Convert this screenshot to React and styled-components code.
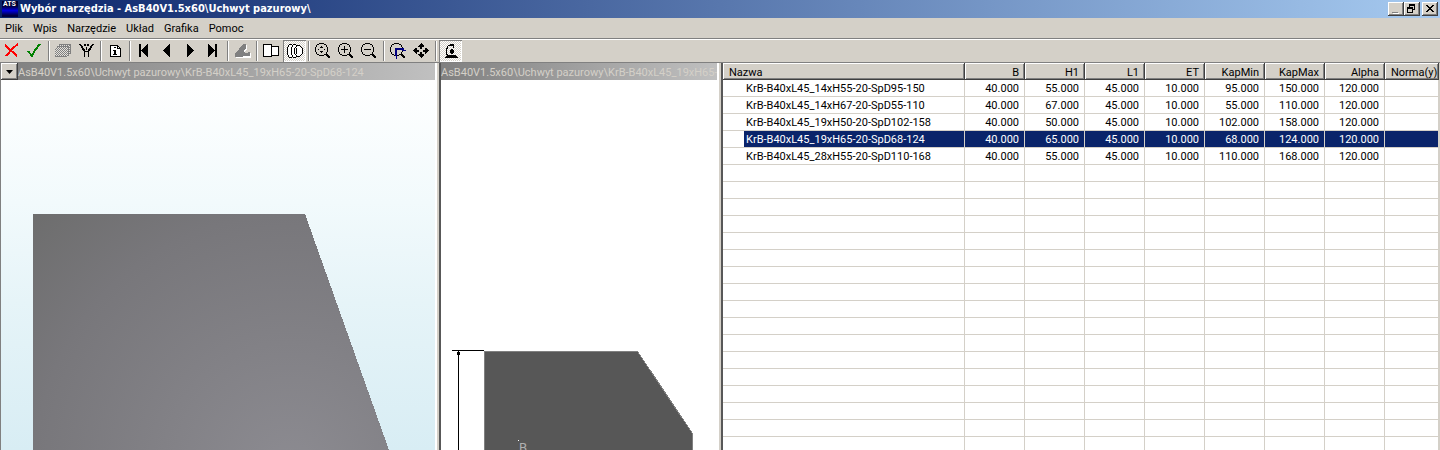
import React, { useState } from 'react';
import styled, { createGlobalStyle, css } from 'styled-components';

const face = '#d4d0c8';
const navy = '#0a246a';

const GlobalStyle = createGlobalStyle`
  * {
    box-sizing: border-box;
  }
  body {
    margin: 0;
    overflow: hidden;
    background: ${face};
    font-family: Roboto, "Liberation Sans", Arial, sans-serif;
    font-size: 11px;
    color: #000;
  }
  button {
    font: inherit;
    color: inherit;
    border: 0;
    padding: 0;
    background: none;
  }
`;

const raised = css`
  background: ${face};
  box-shadow: inset -1px -1px #404040, inset 1px 1px #fff,
    inset -2px -2px #808080;
`;

const Window = styled.div`
  display: flex;
  flex-direction: column;
  height: 100vh;
`;

const TitleBar = styled.header`
  display: flex;
  align-items: center;
  height: 18px;
  padding: 0 2px;
  gap: 2px;
  background: linear-gradient(to right, ${navy}, #a6caf0);
`;

const Title = styled.h1`
  flex: 1;
  margin: 0;
  font-family: 'DejaVu Sans Condensed', 'DejaVu Sans', sans-serif;
  font-size: 11px;
  line-height: 18px;
  font-weight: bold;
  color: #fff;
  white-space: nowrap;
`;

const WindowButtons = styled.div`
  display: flex;
`;

const WindowButton = styled.button`
  ${raised}
  width: 16px;
  height: 14px;
  svg {
    display: block;
  }
`;

const MenuBar = styled.nav`
  display: flex;
  height: 21px;
  border-bottom: 1px solid #808080;
`;

const MenuButton = styled.button`
  padding: 2px 5px 0;
  line-height: 18px;
`;

const ToolBar = styled.div`
  display: flex;
  height: 23px;
  border-top: 1px solid #fff;
`;

const ToolButton = styled.button`
  width: 23px;
  height: 22px;
  ${({ $pressed }) =>
    $pressed &&
    css`
      background: repeating-conic-gradient(#fff 0 25%, ${face} 0 50%) 0 0 / 2px
        2px;
      box-shadow: inset 1px 1px #808080, inset -1px -1px #fff;
    `}
  svg {
    display: block;
  }
`;

const Separator = styled.div`
  width: 2px;
  height: 20px;
  margin: 1px 2px;
  border-left: 1px solid #808080;
  border-right: 1px solid #fff;
`;

const Panes = styled.main`
  flex: 1;
  min-height: 0;
  display: grid;
  grid-template-columns:
    minmax(0, 437fr) 2px minmax(0, 280fr) 2px
    minmax(0, 719fr);
  border-top: 1px solid #808080;
`;

const Pane = styled.section`
  display: flex;
  flex-direction: column;
  min-height: 0;
  overflow: hidden;
  background: #fff;
  border-left: ${({ $first }) =>
    $first ? '1px solid #808080' : '2px solid #585858'};
  border-right: ${({ $last }) =>
    $last ? `1px solid ${face}` : '2px solid #fff'};
`;

const Splitter = styled.div`
  background: ${face};
`;

const PaneTitle = styled.div`
  display: flex;
  flex: none;
  height: 17px;
  line-height: 19px;
  overflow: hidden;
  white-space: nowrap;
  color: ${face};
  background: linear-gradient(to right, #808080, #c0c0c0);
`;

const PaneMenuButton = styled.button`
  ${raised}
  flex: none;
  width: 17px;
  height: 17px;
  svg {
    display: block;
  }
`;

const Scene = styled.svg`
  display: block;
  flex: 1;
  min-height: 0;
  width: 100%;
  background: ${({ $sky }) =>
    $sky ? 'linear-gradient(#fff, #f2fafc 33%, #e6f4f8 60%, #d8edf4)' : '#fff'};
`;

const Table = styled.table`
  width: 100%;
  table-layout: fixed;
  border-collapse: separate;
  border-spacing: 0;
`;

const NameCol = styled.col`
  width: 242px;
`;

const NumberCol = styled.col`
  width: 60px;
`;

const HeadCell = styled.th`
  ${raised}
  height: 17px;
  padding: 2px 6px 0;
  line-height: 15px;
  font-weight: normal;
  text-align: ${({ $left }) => ($left ? 'left' : 'right')};
  white-space: nowrap;
  overflow: hidden;
`;

const Cell = styled.td`
  height: 17px;
  padding: ${({ $name }) => ($name ? '0' : '2px 5px 0')};
  line-height: 14px;
  text-align: ${({ $name }) => ($name ? 'left' : 'right')};
  white-space: nowrap;
  border-right: 1px solid ${face};
  border-bottom: 1px solid ${face};
`;

const ToolName = styled.span`
  display: block;
  margin-left: 21px;
  padding: 2px 0 0 2px;
`;

const Row = styled.tr`
  ${({ $selected }) =>
    $selected &&
    css`
      color: #fff;
      ${ToolName}, ${Cell}:not(:first-child) {
        background: ${navy};
      }
    `}
`;

const Icon = ({ children, ...props }) => (
  <svg
    width="23"
    height="22"
    viewBox="0 0 23 22"
    fill="none"
    stroke="#000"
    shapeRendering="crispEdges"
    aria-hidden="true"
    {...props}
  >
    {children}
  </svg>
);

const Lens = ({ children }) => (
  <Icon>
    <path d="M7 3.5h5M5 4.5h2M12 4.5h2M4.5 5v2M14.5 5v2M3.5 7v5M15.5 7v5M4.5 12v2M14.5 12v2M5 14.5h2M12 14.5h2M7 15.5h5" />
    <path d="M14 14l4 4" strokeWidth="2" />
    {children}
  </Icon>
);

const icons = {
  cancel: (
    <Icon stroke="#f00" strokeWidth="2">
      <path d="M5 5l12 11M18 4l-5 4-7 8" />
    </Icon>
  ),
  accept: (
    <Icon stroke="#008000" strokeWidth="2">
      <path d="M5 11l4 5 3-6 5-6" />
    </Icon>
  ),
  stack: (
    <Icon stroke="none">
      <defs>
        <pattern id="mesh" width="2" height="2" patternUnits="userSpaceOnUse">
          <path d="M0 0h1v1H0zM1 1h1v1H1z" fill="#808080" />
        </pattern>
      </defs>
      <path d="M7 4h11l1 1v9l-3 1v2H4l-1-1V9l2-1V6z" fill="#e4e1dc" />
      <path d="M7 4h11l1 1v9l-3 1v2H4l-1-1V9l2-1V6z" fill="url(#mesh)" />
      <path
        d="M7 4.5h11M5 6.5h11M18.5 5v9M16.5 7v9M3 16.5h11"
        stroke="#808080"
      />
    </Icon>
  ),
  fork: (
    <Icon>
      <path d="M4 4.5h2M5 5.5h2M6 6.5h2M6 7.5h2M7 8.5h2M7 9.5h3M8 10.5h2M17 4.5h2M16 5.5h2M15 6.5h2M15 7.5h2M14 8.5h2M13 9.5h3M13 10.5h2M9 11.5h5M9.5 12v5M13.5 12v5" />
      <path d="M9 4h2v2H9zM12 4h2v2h-2zM11 7h1v3h-1z" fill="#000" stroke="none" />
    </Icon>
  ),
  info: (
    <Icon>
      <path d="M6.5 5.5h7l3 3v8h-10z" fill="#fff" />
      <path d="M13.5 5v3.5H17" />
      <path
        d="M10 7h2v1h-2zM9 10h3v4h1v1H9v-1h1v-3H9z"
        fill="#000"
        stroke="none"
      />
    </Icon>
  ),
  first: (
    <Icon stroke="none" fill="#000">
      <path d="M6 4h2v13H6zM15 4v13l-7-6.5z" />
    </Icon>
  ),
  previous: (
    <Icon stroke="none" fill="#000">
      <path d="M14 4v13l-7-6.5z" />
    </Icon>
  ),
  next: (
    <Icon stroke="none" fill="#000">
      <path d="M8 4v13l7-6.5z" />
    </Icon>
  ),
  last: (
    <Icon stroke="none" fill="#000">
      <path d="M13 4h2v13h-2zM6 4v13l7-6.5z" />
    </Icon>
  ),
  profile: (
    <Icon stroke="none">
      <path d="M5 18v-4l3-2 2-4 3-3h3v5l-2 1v2l2 1 4-1v5z" fill="#fff" />
      <path d="M4 17v-4l3-2 2-4 3-3h3v5l-2 1v2l2 1 4-1v4z" fill="#808080" />
    </Icon>
  ),
  flat: (
    <Icon fill="#fff">
      <path d="M3.5 4.5h8v12h-8zM11.5 6.5h7v9h-7z" />
    </Icon>
  ),
  rings: (
    <Icon fill="#fff">
      <path d="M6.5 4.5h2l2 3v7l-2 3h-2l-2-3v-7z" />
      <path d="M10.5 4.5h2l2 3v7l-2 3h-2l-2-3v-7z" />
      <path d="M14.5 5.5h2l3 3v5l-3 3h-2l-3-3v-5z" />
      <path d="M13.5 8v6" />
    </Icon>
  ),
  zoomFit: (
    <Lens>
      <path
        d="M8 7h3v1H8zM9 6h1v1H9zM8 11h3v1H8zM9 12h1v1H9zM6 9h1v1H6zM12 9h1v1h-1z"
        fill="#000"
        stroke="none"
      />
    </Lens>
  ),
  zoomIn: (
    <Lens>
      <path d="M6 9.5h7M9.5 6v7" />
    </Lens>
  ),
  zoomOut: (
    <Lens>
      <path d="M6 9.5h7" />
    </Lens>
  ),
  zoomWindow: (
    <Lens>
      <path d="M9 16V9h8" stroke="#000080" strokeWidth="2" />
      <path d="M15 10.5h4M9.5 15v4" stroke="#000080" />
    </Lens>
  ),
  pan: (
    <Icon stroke="none" fill="#000">
      <path d="M11 3l3 3v1h-2v2h-2V7H8V6zM11 18l3-3v-1h-2v-2h-2v2H8v1zM3 10.5l3-3h1v2h2v2H7v2H6zM19 10.5l-3-3h-1v2h-2v2h2v2h1z" />
    </Icon>
  ),
  rotate: (
    <Icon>
      <path d="M6 17h13v1H6zM8 15h9l1 2H7z" fill="#000" stroke="none" />
      <path d="M9 14.5H7M7.5 14V8M8.5 9V6M9 5.5h5M11 4.5h4M14.5 5v3" />
      <path d="M11 10h4v3h-4zM12 9h2v5h-2z" fill="#000" stroke="none" />
    </Icon>
  ),
};

const toolGroups = [
  ['cancel', 'accept'],
  ['stack', 'fork'],
  ['info'],
  ['first', 'previous', 'next', 'last'],
  ['profile'],
  ['flat', 'rings'],
  ['zoomFit', 'zoomIn', 'zoomOut'],
  ['zoomWindow', 'pan'],
  ['rotate'],
];

const pressedTools = ['rings', 'rotate'];

const menus = ['Plik', 'Wpis', 'Narzędzie', 'Układ', 'Grafika', 'Pomoc'];

const columns = ['B', 'H1', 'L1', 'ET', 'KapMin', 'KapMax', 'Alpha'];

const tools = [
  ['KrB-B40xL45_14xH55-20-SpD95-150', 40, 55, 45, 10, 95, 150, 120],
  ['KrB-B40xL45_14xH67-20-SpD55-110', 40, 67, 45, 10, 55, 110, 120],
  ['KrB-B40xL45_19xH50-20-SpD102-158', 40, 50, 45, 10, 102, 158, 120],
  ['KrB-B40xL45_19xH65-20-SpD68-124', 40, 65, 45, 10, 68, 124, 120],
  ['KrB-B40xL45_28xH55-20-SpD110-168', 40, 55, 45, 10, 110, 168, 120],
];

const emptyRows = Array.from({ length: 50 }, (_, i) => i);

const path = 'AsB40V1.5x60\\Uchwyt pazurowy\\';

const Logo = () => (
  <svg width="16" height="16" viewBox="0 0 16 16" aria-hidden="true">
    <defs>
      <linearGradient id="logo" x2="0" y2="1">
        <stop offset="0.3" stopColor="#000030" />
        <stop offset="0.6" stopColor="#0000e0" />
        <stop offset="0.9" stopColor="#000040" />
      </linearGradient>
    </defs>
    <path d="M0 0h16v16H0z" fill="url(#logo)" />
    <text x="1" y="5" fontSize="7" fontWeight="bold" fill="#fff">
      ATS
    </text>
  </svg>
);

const WindowControls = () => (
  <>
    <WindowButtons>
      <WindowButton aria-label="Minimalizuj">
        <svg width="16" height="14">
          <path d="M5 11h6v1H5z" fill="#fff" />
          <path d="M4 10h6v1H4z" fill="#808080" />
        </svg>
      </WindowButton>
      <WindowButton aria-label="Przywróć">
        <svg
          width="16"
          height="14"
          fill="none"
          stroke="#000"
          shapeRendering="crispEdges"
        >
          <path d="M5 2.5h6M5.5 2v3M10.5 2v6M8 7.5h3M3 6.5h6M3.5 5v6M8.5 5v6M3 10.5h6" />
          <path d="M5 3.5h6M3 5.5h6" />
        </svg>
      </WindowButton>
    </WindowButtons>
    <WindowButton aria-label="Zamknij">
      <svg width="16" height="14" shapeRendering="crispEdges">
        <path d="M4 3h2v1H4zM5 4h2v1H5zM6 5h4v1H6zM7 6h2v1H7zM6 7h4v1H6zM5 8h2v1H5zM4 9h2v1H4zM10 3h2v1h-2zM9 4h2v1H9zM9 8h2v1H9zM10 9h2v1h-2z" />
      </svg>
    </WindowButton>
  </>
);

const ToolTable = () => {
  const [selected, setSelected] = useState(3);
  return (
    <Table>
      <colgroup>
        <NameCol />
        {columns.map((name) => (
          <NumberCol key={name} />
        ))}
        <col />
      </colgroup>
      <thead>
        <tr>
          <HeadCell $left>Nazwa</HeadCell>
          {columns.map((name) => (
            <HeadCell key={name}>{name}</HeadCell>
          ))}
          <HeadCell $left>Norma(y) o</HeadCell>
        </tr>
      </thead>
      <tbody>
        {tools.map(([name, ...values], i) => (
          <Row
            key={name}
            $selected={i === selected}
            onClick={() => setSelected(i)}
          >
            <Cell $name>
              <ToolName>{name}</ToolName>
            </Cell>
            {values.map((value, n) => (
              <Cell key={columns[n]}>{value.toFixed(3)}</Cell>
            ))}
            <Cell />
          </Row>
        ))}
        {emptyRows.map((i) => (
          <Row key={i}>
            <Cell $name />
            {columns.map((name) => (
              <Cell key={name} />
            ))}
            <Cell />
          </Row>
        ))}
      </tbody>
    </Table>
  );
};

const App = () => (
  <>
    <GlobalStyle />
    <Window>
      <TitleBar>
        <Logo />
        <Title>Wybór narzędzia - {path}</Title>
        <WindowControls />
      </TitleBar>
      <MenuBar>
        {menus.map((name) => (
          <MenuButton key={name}>{name}</MenuButton>
        ))}
      </MenuBar>
      <ToolBar>
        {toolGroups.map((group, i) => (
          <React.Fragment key={group[0]}>
            {i > 0 && <Separator />}
            {group.map((name) => (
              <ToolButton
                key={name}
                aria-label={name}
                $pressed={pressedTools.includes(name)}
              >
                {icons[name]}
              </ToolButton>
            ))}
          </React.Fragment>
        ))}
      </ToolBar>
      <Panes>
        <Pane $first>
          <PaneTitle>
            <PaneMenuButton aria-label="Menu widoku">
              <svg width="17" height="17">
                <path d="M5 7h7l-3.5 4z" />
              </svg>
            </PaneMenuButton>
            {path}KrB-B40xL45_19xH65-20-SpD68-124
          </PaneTitle>
          <Scene $sky>
            <defs>
              <radialGradient
                id="steel"
                gradientUnits="userSpaceOnUse"
                cx="289"
                cy="390"
                r="365"
              >
                <stop offset="0" stopColor="#8c8b91" />
                <stop offset="0.7" stopColor="#78777b" />
                <stop offset="1" stopColor="#6d6d6d" />
              </radialGradient>
            </defs>
            <path
              d="M32 134h272l84 236 50 140H32z"
              fill="url(#steel)"
              shapeRendering="crispEdges"
            />
          </Scene>
        </Pane>
        <Splitter />
        <Pane>
          <PaneTitle>{path}KrB-B40xL45_19xH65-20-SpD68-124</PaneTitle>
          <Scene shapeRendering="crispEdges">
            <path
              d="M43.5 271.5h153l55 82v200h-208z"
              fill="#575757"
              stroke="#808080"
            />
            <path d="M11 270.5h32M17.5 270v300" stroke="#000" />
            <path d="M16 272h3v3h-3z" />
            <path d="M77 360h1v1h-1z" fill="#fff" />
            <text x="78" y="372" fontSize="13" fill="#b0b0b0">
              B
            </text>
          </Scene>
        </Pane>
        <Splitter />
        <Pane $last>
          <ToolTable />
        </Pane>
      </Panes>
    </Window>
  </>
);

export default App;
